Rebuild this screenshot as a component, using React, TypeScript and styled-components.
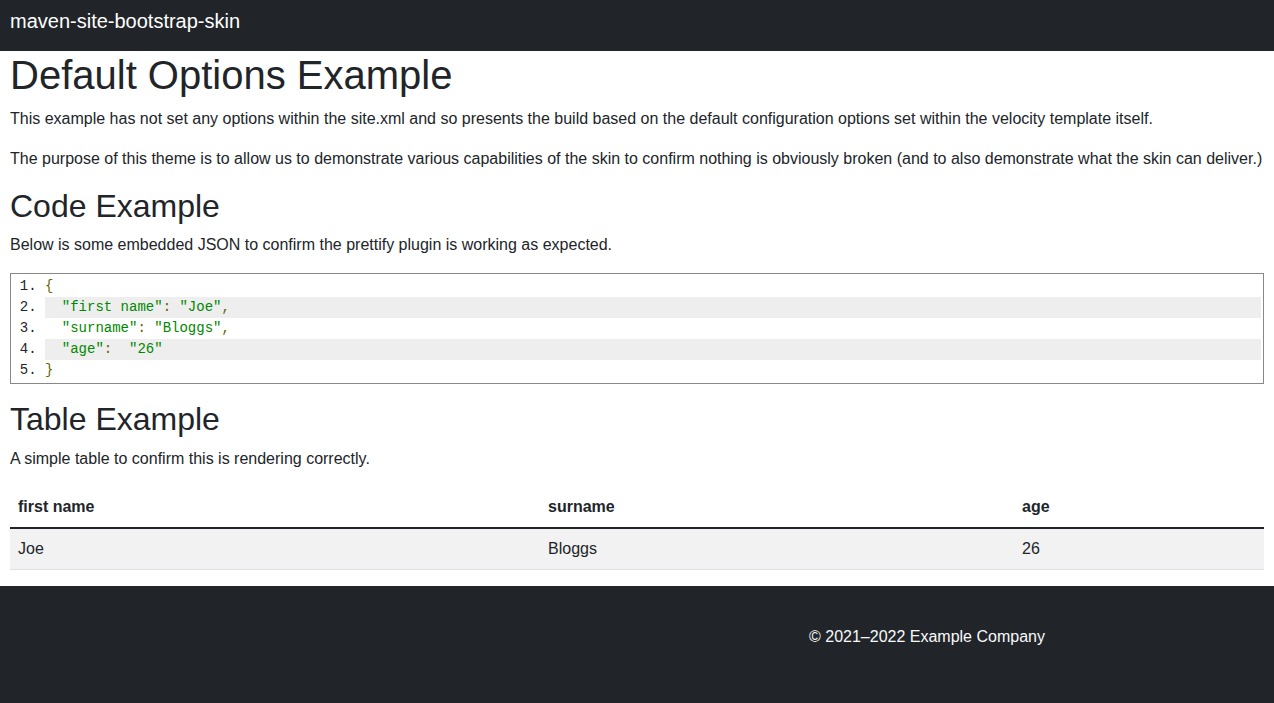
import React from 'react'
import styled, { createGlobalStyle } from 'styled-components'

// ____________________________________________________________________________
//
type Token = { kind: 'pun' | 'str' | 'pln'; text: string }

const codeLines: Token[][] = [
  [{ kind: 'pun', text: '{' }],
  [
    { kind: 'pln', text: '  ' },
    { kind: 'str', text: '"first name"' },
    { kind: 'pun', text: ': ' },
    { kind: 'str', text: '"Joe"' },
    { kind: 'pun', text: ',' },
  ],
  [
    { kind: 'pln', text: '  ' },
    { kind: 'str', text: '"surname"' },
    { kind: 'pun', text: ': ' },
    { kind: 'str', text: '"Bloggs"' },
    { kind: 'pun', text: ',' },
  ],
  [
    { kind: 'pln', text: '  ' },
    { kind: 'str', text: '"age"' },
    { kind: 'pun', text: ':  ' },
    { kind: 'str', text: '"26"' },
  ],
  [{ kind: 'pun', text: '}' }],
]

const people = [{ first: 'Joe', surname: 'Bloggs', age: '26' }]

// ____________________________________________________________________________
//
export default function App() {
  return (
    <>
      <GlobalStyle />
      <Navbar>
        <Brand href="#">maven-site-bootstrap-skin</Brand>
      </Navbar>
      <Main>
        <H1>Default Options Example</H1>
        <P>
          This example has not set any options within the site.xml and so presents the build
          based on the default configuration options set within the velocity template itself.
        </P>
        <P>
          The purpose of this theme is to allow us to demonstrate various capabilities of the
          skin to confirm nothing is obviously broken (and to also demonstrate what the skin can
          deliver.)
        </P>

        <H2>Code Example</H2>
        <P>Below is some embedded JSON to confirm the prettify plugin is working as expected.</P>
        <Pre>
          <LineList>
            {codeLines.map((line, i) => (
              <Line key={i} $even={i % 2 === 1}>
                {line.map((t, j) => (
                  <Tok key={j} $kind={t.kind}>
                    {t.text}
                  </Tok>
                ))}
              </Line>
            ))}
          </LineList>
        </Pre>

        <H2>Table Example</H2>
        <P>A simple table to confirm this is rendering correctly.</P>
        <Table>
          <colgroup>
            <col style={{ width: 530 }} />
            <col style={{ width: 474 }} />
            <col />
          </colgroup>
          <thead>
            <tr>
              <Th>first name</Th>
              <Th>surname</Th>
              <Th>age</Th>
            </tr>
          </thead>
          <tbody>
            {people.map((p, i) => (
              <Row key={i} $striped={i % 2 === 0}>
                <Td>{p.first}</Td>
                <Td>{p.surname}</Td>
                <Td>{p.age}</Td>
              </Row>
            ))}
          </tbody>
        </Table>
      </Main>
      <Footer>
        <FooterText>© 2021–2022 Example Company</FooterText>
      </Footer>
    </>
  )
}

// ____________________________________________________________________________
//
const GlobalStyle = createGlobalStyle`
  html, body {
    margin: 0;
    padding: 0;
    background: #fff;
  }
  body {
    font-family: "Liberation Sans", Arial, sans-serif;
    font-size: 16px;
    line-height: 1.5;
    color: #212529;
  }
  * {
    box-sizing: border-box;
  }
`

const Navbar = styled.nav`
  display: flex;
  align-items: flex-start;
  height: 51px;
  padding: 6px 10px 0;
  background-color: #212529;
`

const Brand = styled.a`
  font-size: 20px;
  line-height: 30px;
  color: #fff;
  text-decoration: none;
`

const Main = styled.main`
  padding: 0 10px;
`

const H1 = styled.h1`
  margin: 0 0 8px;
  font-size: 40px;
  font-weight: 500;
  line-height: 1.2;
`

const H2 = styled.h2`
  margin: 0 0 8px;
  font-size: 32px;
  font-weight: 500;
  line-height: 1.2;
`

const P = styled.p`
  margin: 0 0 16px;
`

const Pre = styled.pre`
  margin: 0 0 16px;
  padding: 2px;
  border: 1px solid #888;
  font-family: "Liberation Mono", "Courier New", monospace;
  font-size: 14px;
  line-height: 21px;
  white-space: pre;
`

const LineList = styled.ol`
  margin: 0;
  padding-left: 32px;
  list-style-type: decimal;
  color: #212529;
`

const Line = styled.li<{ $even: boolean }>`
  height: 21px;
  background: ${(p) => (p.$even ? '#eee' : 'transparent')};
`

const Tok = styled.span<{ $kind: Token['kind'] }>`
  color: ${(p) => (p.$kind === 'str' ? '#080' : p.$kind === 'pun' ? '#660' : '#000')};
`

const Table = styled.table`
  width: 100%;
  margin-bottom: 16px;
  border-collapse: collapse;
  table-layout: fixed;
`

const Th = styled.th`
  padding: 8px;
  text-align: left;
  font-weight: 700;
  border-bottom: 2px solid #212529;
`

const Row = styled.tr<{ $striped: boolean }>`
  background: ${(p) => (p.$striped ? '#f2f2f2' : 'transparent')};
`

const Td = styled.td`
  padding: 8px;
  border-bottom: 1px solid #dee2e6;
`

const Footer = styled.footer`
  display: grid;
  grid-template-columns: 809px 1fr;
  min-height: 160px;
  padding-top: 39px;
  background-color: #212529;
`

const FooterText = styled.p`
  grid-column: 2;
  margin: 0;
  color: #f8f9fa;
`
